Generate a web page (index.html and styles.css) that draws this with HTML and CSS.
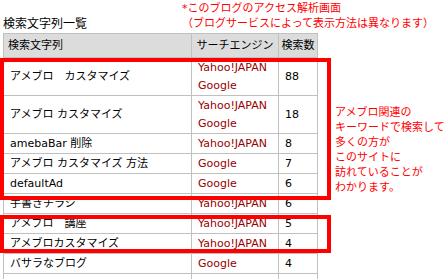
FILE: index.html
```html
<!DOCTYPE html>
<html lang="ja">
<head>
<meta charset="utf-8">
<title>検索文字列一覧</title>
<link rel="stylesheet" href="styles.css">
</head>
<body>
<div class="page">
  <header class="top">
    <h1 class="title">検索文字列一覧</h1>
    <p class="note-top">*このブログのアクセス解析画面<br>（ブログサービスによって表示方法は異なります）</p>
  </header>
  <div class="main">
    <div class="table">
      <div class="th c1">検索文字列</div>
      <div class="th c2">サーチエンジン</div>
      <div class="th c3">検索数</div>

      <div class="td c1 dbl">アメブロ　カスタマイズ</div>
      <div class="td c2 dbl"><span>Yahoo!JAPAN</span><span>Google</span></div>
      <div class="td c3 dbl">88</div>

      <div class="td c1 dbl">アメブロ カスタマイズ</div>
      <div class="td c2 dbl"><span>Yahoo!JAPAN</span><span>Google</span></div>
      <div class="td c3 dbl">18</div>

      <div class="td c1">amebaBar 削除</div>
      <div class="td c2">Yahoo!JAPAN</div>
      <div class="td c3">8</div>

      <div class="td c1">アメブロ カスタマイズ 方法</div>
      <div class="td c2">Google</div>
      <div class="td c3">7</div>

      <div class="td c1">defaultAd</div>
      <div class="td c2">Google</div>
      <div class="td c3">6</div>

      <div class="td c1">手書きチラシ</div>
      <div class="td c2">Yahoo!JAPAN</div>
      <div class="td c3">6</div>

      <div class="td c1">アメブロ　講座</div>
      <div class="td c2">Yahoo!JAPAN</div>
      <div class="td c3">5</div>

      <div class="td c1">アメブロカスタマイズ</div>
      <div class="td c2">Yahoo!JAPAN</div>
      <div class="td c3">4</div>

      <div class="td c1">バサラなブログ</div>
      <div class="td c2">Google</div>
      <div class="td c3">4</div>

      <div class="td c1"></div>
      <div class="td c2"></div>
      <div class="td c3"></div>
    </div>
    <p class="note-side">アメブロ関連の<br>キーワードで検索して<br>多くの方が<br>このサイトに<br>訪れていることが<br>わかります。</p>
    <div class="mark mark1"></div>
    <div class="mark mark2"></div>
  </div>
</div>
</body>
</html>
```

FILE: styles.css
```css
html, body {
  margin: 0;
  padding: 0;
  overflow: hidden;
  background: #fff;
}

body {
  font-family: "DejaVu Sans", "Noto Sans CJK JP", sans-serif;
  font-size: 11px;
  color: #000;
}

.top {
  display: grid;
  grid-template-columns: 182px auto;
  height: 33px;
}

.title {
  margin: 0 0 1px 0;
  padding-left: 3px;
  font-size: 12px;
  font-weight: normal;
  line-height: 16px;
  align-self: end;
  white-space: nowrap;
}

.note-top {
  margin: 0;
  padding-top: 1px;
  line-height: 15px;
  color: #f00;
  white-space: nowrap;
}

.main {
  position: relative;
  display: flex;
  align-items: flex-start;
  padding-left: 3px;
}

.table {
  display: grid;
  grid-template-columns: 187px 86px 38px;
  gap: 1px;
  padding: 1px;
  background: #c0c0c0;
  width: 315px;
  box-sizing: border-box;
  flex: none;
}

.th {
  background: #dcdcdc;
  height: 23px;
  line-height: 23px;
  white-space: nowrap;
}

.th.c1 {
  padding-left: 4px;
}

.th.c2,
.th.c3 {
  text-align: center;
}

.td {
  background: #fff;
  height: 19px;
  line-height: 18px;
  padding: 1px 0 0 6px;
  box-sizing: border-box;
  display: flex;
  align-items: center;
  white-space: nowrap;
}

.td.dbl {
  height: 37px;
  padding-top: 0;
}

.td.c2 {
  color: #990000;
}

.td.c2.dbl {
  flex-direction: column;
  align-items: flex-start;
  justify-content: center;
}

.note-side {
  margin: 72px 0 0 17px;
  line-height: 15px;
  color: #f00;
  white-space: nowrap;
}

.mark {
  position: absolute;
  left: 0;
  width: 331px;
  border: 4px solid #f00;
  box-sizing: border-box;
  pointer-events: none;
}

.mark1 {
  top: 25px;
  height: 142px;
}

.mark2 {
  top: 182px;
  height: 38px;
}
```
